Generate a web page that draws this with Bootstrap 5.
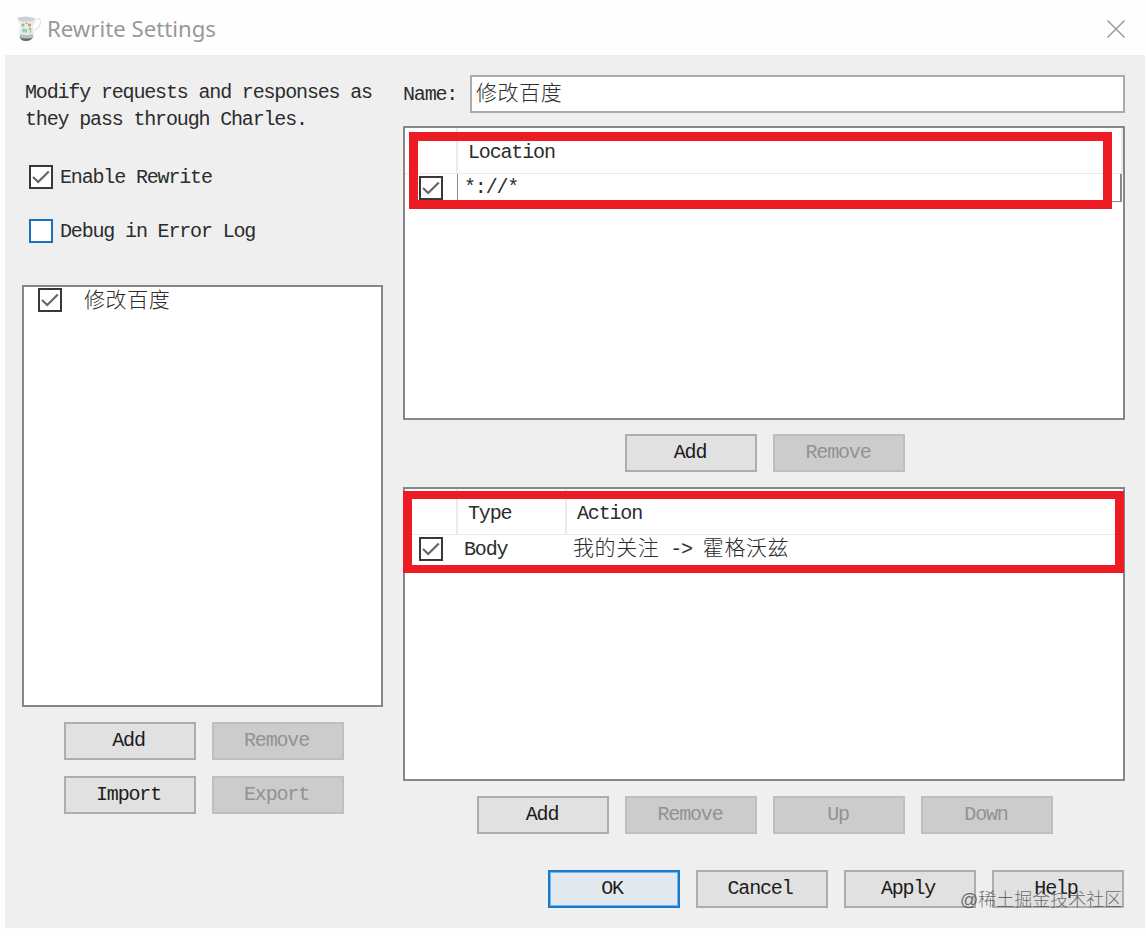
<!DOCTYPE html>
<html lang="en">
<head>
    <meta charset="UTF-8">
    <meta name="viewport" content="width=device-width, initial-scale=1.0">
    <title>Rewrite Settings</title>
    <link href="https://cdn.jsdelivr.net/npm/bootstrap@5.3.0/dist/css/bootstrap.min.css" rel="stylesheet">
    <style>
        body {
            width: 1146px;
            height: 936px;
            overflow: hidden;
            background: #fefefe;
            color: #2c2c2c;
            font: 20px/27px "Liberation Mono", "Noto Sans CJK SC", monospace;
            letter-spacing: -1.16px;
            white-space: nowrap;
        }
        .zh {
            font-family: "Noto Sans CJK SC", sans-serif;
            font-size: 21px;
            font-weight: 300;
            letter-spacing: .6px;
            line-height: 24px;
        }
        .title-bar { height: 55px; padding: 3px 20px 0 17px; }
        .title-text {
            font: 22.2px/30px "Noto Sans", sans-serif;
            letter-spacing: 0;
            color: #999;
            margin: 0 0 1px 6px;
        }
        .dialog-body { width: 1140px; height: 873px; margin-left: 5px; background: #efefef; }
        .left-side { width: 361px; margin-left: 17px; padding-top: 24px; }
        .right-side { width: 722px; margin-left: 20px; padding-top: 20px; }
        .intro { margin: 0 0 0 3px; }
        .tick { width: 24px; height: 24px; flex: none; background: #fff; border: 2px solid #383838; }
        .tick svg { display: block; margin: -2px; }
        .tick-focus { border-color: #1c71b8; }
        .option { height: 24px; margin-left: 7px; gap: 7px; }
        .pane { background: #fff; border: 2px solid #85888b; }
        .set-list { height: 422px; margin-top: 42px; }
        .set-row { height: 26px; padding-left: 14px; gap: 22px; }
        .set-row .zh { padding-bottom: 5px; }
        .name-box { width: 655px; height: 38px; background: #fff; border: 2px solid #ababab; padding: 0 0 6px 4px; }
        .rule-pane { height: 294px; }
        .head-row { height: 46px; border-bottom: 1px solid #e8e8e8; }
        .head-row > div { border-right: 2px solid #ebebeb; padding: 11px 0 0 10px; }
        .check-col { width: 53px; flex: none; }
        .type-col { width: 109px; flex: none; }
        .data-row { height: 28px; }
        .data-row .check-col { padding-left: 14px; }
        .cell-edit { border: 1px solid #888; border-top: 0; border-right-width: 2px; margin: 0 1px 0 -1px; padding-left: 6px; }
        .frame { position: absolute; border: 8px solid #ed1c24; }
        .frame-location { left: 4px; top: 4px; width: 703px; height: 77px; border-width: 9px; }
        .frame-body { left: -2px; top: 2px; width: 721px; height: 82px; border-width: 8px 9px; }
        .btn-win {
            width: 132px;
            height: 38px;
            padding: 0 2px 0 0;
            border: 2px solid #adadad;
            border-radius: 0;
            background: #e1e1e1;
            color: #1c1c1c;
            font-family: inherit;
            font-size: 20px;
            line-height: 34px;
            letter-spacing: inherit;
        }
        .btn-win:disabled { background: #ccc; border-color: #bfbfbf; color: #929292; opacity: 1; }
        .btn-ok { background: #e4e9ef; border-color: #1979ca; box-shadow: inset 0 0 0 1px #70b5ef; }
        .btn-row { gap: 16px; padding-left: 2px; }
        .dialog-actions .btn-win { padding-right: 4px; }
        .site-tag {
            position: absolute;
            left: 960px;
            top: 887px;
            font: 300 18px/27px "Liberation Sans", "Noto Sans CJK SC", sans-serif;
            letter-spacing: 0;
            color: rgba(70, 70, 70, .78);
        }
    </style>
</head>
<body class="position-relative">
    <svg width="0" height="0" class="position-absolute">
        <symbol id="check" viewBox="0 0 24 24">
            <path d="M4 12l5.200 5L19.800 6.500" fill="none" stroke="#666" stroke-width="2.200"/>
        </symbol>
    </svg>

    <header class="title-bar d-flex align-items-center">
        <svg width="24" height="26" viewBox="0 0 24 26">
            <path d="M17 4.500c5-4 8-1 6 4-1 3-3 5-6 6" fill="none" stroke="#e4e4e4" stroke-width="1.300"/>
            <path d="M0 2l4 2q7 2 13-1l1 3-2 4 1 10q-1 5-8 5t-7-5l1-11z" fill="#e9ebe9"/>
            <path d="M0 2q8-3 17 0l1 2q-8 3-15 1z" fill="#cfd1cf"/>
            <path d="M3 20q6 3 13 0-1 5-7 5t-6-5z" fill="#606768"/>
            <path d="M3 18q6 2 13 0l-1 4q-5 1-11 0z" fill="#b5bfc3"/>
            <circle cx="6" cy="9" r="1.500" fill="#8dc56b"/>
            <circle cx="12.500" cy="9" r="1.600" fill="#dc8f86"/>
            <circle cx="7" cy="14.500" r="2" fill="#8dcfc5"/>
            <circle cx="13" cy="13" r="1.400" fill="#a2cd83"/>
            <path d="M8 7l3 1M10 13l-1 4M13 17l1-3" stroke="#8fbb92"/>
        </svg>
        <span class="title-text">Rewrite Settings</span>
        <svg class="ms-auto" width="20" height="20" viewBox="0 0 20 20">
            <path d="M1.500 1.500l17 17M18.500 1.500l-17 17" stroke="#999" stroke-width="1.500"/>
        </svg>
    </header>

    <main class="dialog-body d-flex align-items-start">
        <section class="left-side">
            <p class="intro">Modify requests and responses as<br>they pass through Charles.</p>
            <div class="option d-flex align-items-center" style="margin-top: 32px">
                <span class="tick"><svg width="24" height="24"><use href="#check"/></svg></span>
                <span>Enable Rewrite</span>
            </div>
            <div class="option d-flex align-items-center" style="margin-top: 30px">
                <span class="tick tick-focus"></span>
                <span>Debug in Error Log</span>
            </div>
            <div class="pane set-list">
                <div class="set-row d-flex align-items-center">
                    <span class="tick"><svg width="24" height="24"><use href="#check"/></svg></span>
                    <span class="zh">修改百度</span>
                </div>
            </div>
            <div class="btn-row d-flex flex-wrap justify-content-center" style="margin-top: 15px">
                <button class="btn btn-win">Add</button>
                <button class="btn btn-win" disabled>Remove</button>
                <button class="btn btn-win">Import</button>
                <button class="btn btn-win" disabled>Export</button>
            </div>
        </section>

        <section class="right-side">
            <div class="d-flex align-items-center justify-content-between">
                <label>Name:</label>
                <div class="name-box d-flex align-items-center"><span class="zh">修改百度</span></div>
            </div>

            <div class="pane rule-pane position-relative" style="margin-top: 13px">
                <div class="head-row d-flex">
                    <div class="check-col"></div>
                    <div class="flex-fill">Location</div>
                </div>
                <div class="data-row d-flex">
                    <div class="check-col d-flex align-items-center">
                        <span class="tick"><svg width="24" height="24"><use href="#check"/></svg></span>
                    </div>
                    <div class="cell-edit flex-fill">*://*</div>
                </div>
                <div class="frame frame-location"></div>
            </div>
            <div class="btn-row d-flex justify-content-center" style="margin-top: 14px">
                <button class="btn btn-win">Add</button>
                <button class="btn btn-win" disabled>Remove</button>
            </div>

            <div class="pane rule-pane position-relative" style="margin-top: 15px">
                <div class="head-row d-flex">
                    <div class="check-col"></div>
                    <div class="type-col">Type</div>
                    <div class="flex-fill border-0">Action</div>
                </div>
                <div class="data-row d-flex align-items-center">
                    <div class="check-col d-flex align-items-center">
                        <span class="tick"><svg width="24" height="24"><use href="#check"/></svg></span>
                    </div>
                    <div class="type-col" style="padding-left: 6px">Body</div>
                    <div style="padding: 0 0 2px 6px"><span class="zh">我的关注</span> -&gt; <span class="zh">霍格沃兹</span></div>
                </div>
                <div class="frame frame-body"></div>
            </div>
            <div class="btn-row d-flex justify-content-center" style="margin-top: 15px">
                <button class="btn btn-win">Add</button>
                <button class="btn btn-win" disabled>Remove</button>
                <button class="btn btn-win" disabled>Up</button>
                <button class="btn btn-win" disabled>Down</button>
            </div>
            <div class="btn-row dialog-actions d-flex justify-content-end" style="margin: 36px 1px 0 0">
                <button class="btn btn-win btn-ok">OK</button>
                <button class="btn btn-win">Cancel</button>
                <button class="btn btn-win">Apply</button>
                <button class="btn btn-win">Help</button>
            </div>
        </section>
    </main>
    <div class="site-tag">@稀土掘金技术社区</div>

    <script src="https://cdn.jsdelivr.net/npm/bootstrap@5.3.0/dist/js/bootstrap.bundle.min.js"></script>
</body>
</html>
